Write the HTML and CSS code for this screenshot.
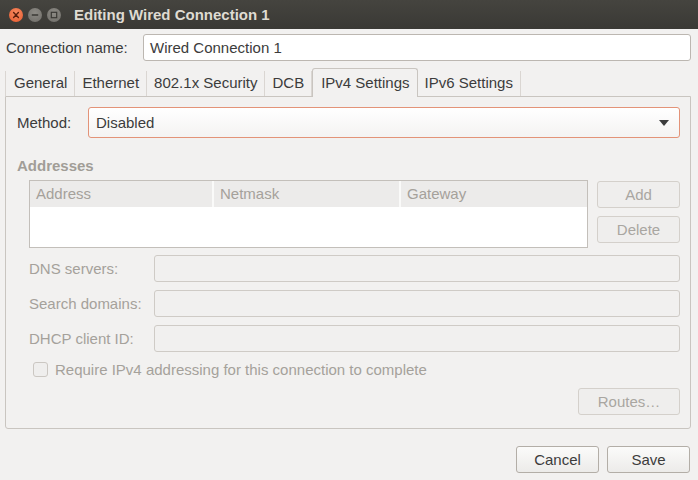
FILE: index.html
```html
<!DOCTYPE html>
<html>
<head>
<meta charset="utf-8">
<link rel="stylesheet" href="styles.css">
</head>
<body>
<div class="window">
  <div class="titlebar">
    <div class="wbtns">
      <span class="wbtn close"><svg width="14" height="14" viewBox="0 0 14 14"><path d="M4.6 4.6 L9.4 9.4 M9.4 4.6 L4.6 9.4" stroke="#5a1e0c" stroke-width="1.4" stroke-linecap="round"/></svg></span>
      <span class="wbtn"><svg width="14" height="14" viewBox="0 0 14 14"><path d="M3.8 7 H10.2" stroke="#3a3935" stroke-width="1.5"/></svg></span>
      <span class="wbtn"><svg width="14" height="14" viewBox="0 0 14 14"><rect x="4.3" y="4.3" width="5.4" height="5.4" fill="none" stroke="#3a3935" stroke-width="1.2"/></svg></span>
    </div>
    <div class="title">Editing Wired Connection 1</div>
  </div>
  <div class="body">
    <div class="name-row">
      <span class="label">Connection name:</span>
      <div class="entry active">Wired Connection 1</div>
    </div>
    <div class="tabs">
      <span class="tab">General</span>
      <span class="tab">Ethernet</span>
      <span class="tab">802.1x Security</span>
      <span class="tab">DCB</span>
      <span class="tab current">IPv4 Settings</span>
      <span class="tab">IPv6 Settings</span>
    </div>
    <div class="panel">
      <div class="method-row">
        <span class="label">Method:</span>
        <div class="combo"><span>Disabled</span><svg width="10" height="6" viewBox="0 0 10 6"><path d="M0 0 H10 L5 6 Z" fill="#3c3c3c"/></svg></div>
      </div>
      <div class="section">Addresses</div>
      <div class="addr">
        <div class="table">
          <div class="thead">
            <span class="col c1">Address</span>
            <span class="col c2">Netmask</span>
            <span class="col c3">Gateway</span>
          </div>
        </div>
        <div class="side">
          <span class="btn dis">Add</span>
          <span class="btn dis">Delete</span>
        </div>
      </div>
      <div class="field"><span class="flabel">DNS servers:</span><div class="entry dis"></div></div>
      <div class="field"><span class="flabel">Search domains:</span><div class="entry dis"></div></div>
      <div class="field"><span class="flabel">DHCP client ID:</span><div class="entry dis"></div></div>
      <div class="check"><span class="box"></span><span>Require IPv4 addressing for this connection to complete</span></div>
      <div class="routes"><span class="btn dis wide">Routes…</span></div>
    </div>
    <div class="footer">
      <span class="btn">Cancel</span>
      <span class="btn">Save</span>
    </div>
  </div>
</div>
</body>
</html>
```
FILE: styles.css
```css
* { box-sizing: border-box; }
html, body { margin: 0; padding: 0; }
body {
  width: 698px; height: 480px; overflow: hidden;
  background: #f2f1f0;
  font-family: "Liberation Sans", Arial, sans-serif;
  font-size: 15px;
  color: #3c3c3c;
}
.titlebar {
  height: 29px;
  background: linear-gradient(#45443f, #3a3935);
  display: flex; align-items: center;
}
.wbtns { display: flex; gap: 5px; margin-left: 9px; }
.wbtn {
  width: 14px; height: 14px; border-radius: 50%;
  background: radial-gradient(circle at 50% 35%, #8d8b85, #6f6d68);
  display: block;
}
.wbtn svg { display: block; }
.wbtn.close { background: radial-gradient(circle at 50% 35%, #f88a60, #e65a2e); }
.title {
  margin-left: 13px;
  color: #dfdbd2; font-weight: bold; font-size: 15px;
}
.body { padding: 5px 7px 0 5px; }
.name-row { display: flex; align-items: center; height: 27px; }
.name-row .label { width: 138px; padding-left: 1px; }
.entry {
  flex: 1; height: 27px; border-radius: 3px;
  border: 1px solid #bcb7b1; background: #fff;
  padding: 0 6px; line-height: 25px;
}
.tabs { display: flex; margin-top: 7px; height: 28px; align-items: flex-end; position: relative; z-index: 1; }
.tab {
  height: 25px; line-height: 24px; padding: 0 7px;
  border-right: 1px solid #dad6d2;
  text-align: center;
}
.tab:first-child { border-left: 1px solid #dad6d2; padding-left: 8px; }
.tab.current {
  line-height: 27px;
  border: 1px solid #c9c5c0; border-bottom: none;
  border-radius: 3px 3px 0 0;
  background: #f2f1f0;
  margin-bottom: -1px; height: 29px;
  padding: 0 7px 0 8px;
}
.tab.last { padding-right: 10px; }
.panel {
  border: 1px solid #c9c5c0; border-radius: 0 0 3px 3px;
  height: 333px;
  padding: 10px 10px 0 11px;
}
.method-row { display: flex; align-items: center; height: 31px; }
.method-row .label { width: 71px; }
.combo {
  flex: 1; height: 31px; border: 1px solid #e39378; border-radius: 3px;
  background: linear-gradient(#ffffff, #f4f3f2);
  display: flex; align-items: center; justify-content: space-between;
  padding: 0 10px 0 7px;
}
.section { margin-top: 19px; font-weight: bold; color: #a19d97; font-size: 15px; height: 18px; line-height: 18px; }
.addr { display: flex; margin-top: 5px; margin-left: 12px; gap: 9px; }
.table {
  width: 560px; height: 68px; border: 1px solid #c3bfba; background: #fff;
}
.thead { display: flex; height: 26px; background: #ecebea; }
.col { color: #a5a19b; line-height: 26px; padding-left: 6px; height: 26px; }
.c1 { width: 184px; border-right: 2px solid #fafaf9; }
.c2 { width: 187px; border-right: 2px solid #fafaf9; }
.c3 { flex: 1; }
.side { display: flex; flex-direction: column; gap: 8px; width: 83px; margin-top: 1px; }
.btn {
  display: block; height: 27px; border: 1px solid #b3aea7; border-radius: 3px;
  background: linear-gradient(#fbfbfa, #ecebe9);
  text-align: center; line-height: 25px; width: 83px;
}
.btn.dis { border-color: #d4d0cb; background: #efeeed; color: #a9a6a1; }
.field { display: flex; align-items: center; margin-left: 12px; margin-top: 8px; height: 27px; }
.addr + .field { margin-top: 7px; }
.flabel { width: 125px; color: #a5a19b; }
.entry.dis { background: #f1f0ef; border-color: #cfcbc6; }
.check { display: flex; align-items: center; margin-left: 16px; margin-top: 8px; height: 18px; color: #a5a19b; }
.box {
  width: 15px; height: 15px; border: 1px solid #cbc7c2; border-radius: 3px;
  background: #efeeed; margin-right: 7px;
}
.routes { display: flex; justify-content: flex-end; margin-top: 10px; }
.btn.wide { width: 102px; }
.footer { display: flex; justify-content: flex-end; gap: 8px; margin-top: 17px; padding-right: 1px; }
.footer .btn { width: 83px; }
```
